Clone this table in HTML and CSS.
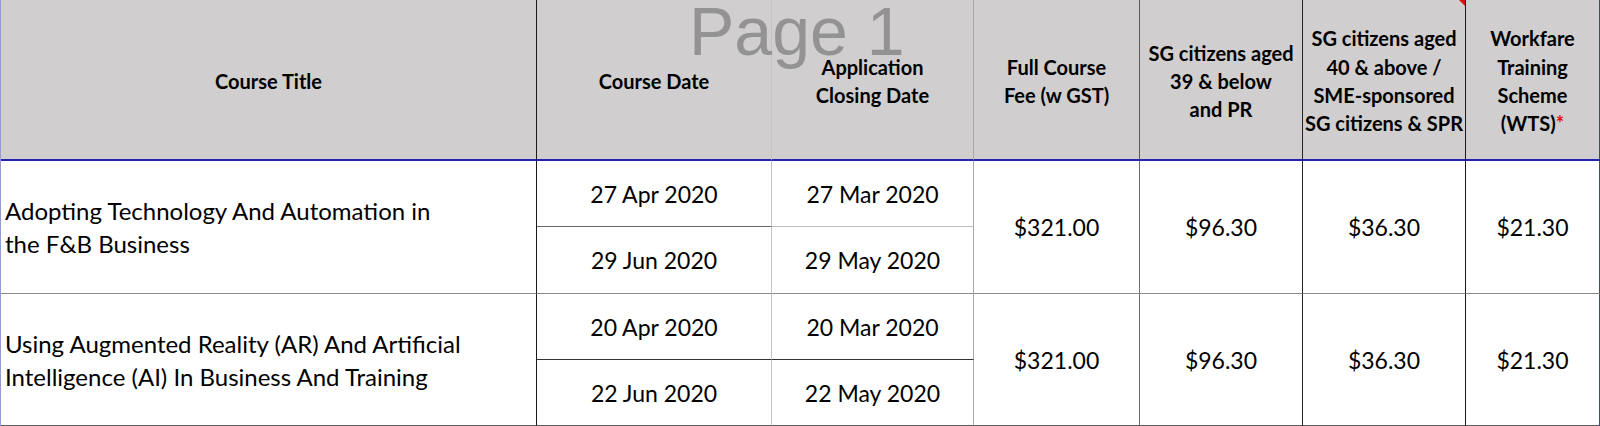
FILE: index.html
```html
<!DOCTYPE html>
<html lang="en">
<head>
<meta charset="utf-8">
<title>Course Fees</title>
<link rel="stylesheet" href="styles.css">
</head>
<body>
<div class="sheet">
  <div class="grid">
    <div class="cell head c1"><span class="txt">Course Title</span></div>
    <div class="cell head c2"><span class="txt">Course Date</span></div>
    <div class="cell head c3"><span class="txt">Application<br>Closing Date</span></div>
    <div class="cell head c4"><span class="txt">Full Course<br>Fee (w GST)</span></div>
    <div class="cell head c5"><span class="txt">SG citizens aged<br>39 &amp; below<br>and PR</span></div>
    <div class="cell head c6"><span class="txt">SG citizens aged<br>40 &amp; above /<br>SME-sponsored<br>SG citizens &amp; SPR</span><span class="comment-mark"></span></div>
    <div class="cell head c7"><span class="txt">Workfare<br>Training<br>Scheme<br>(WTS)<span class="req">*</span></span></div>

    <div class="cell title c1 span2 row-end"><span class="txt">Adopting Technology And Automation in<br>the F&amp;B Business</span></div>
    <div class="cell date c2 split-a">27 Apr 2020</div>
    <div class="cell date c3 split-b">27 Mar 2020</div>
    <div class="cell price c4 span2 row-end">$321.00</div>
    <div class="cell price c5 span2 row-end">$96.30</div>
    <div class="cell price c6 span2 row-end">$36.30</div>
    <div class="cell price c7 span2 row-end">$21.30</div>
    <div class="cell date c2 row-end">29 Jun 2020</div>
    <div class="cell date c3 row-end">29 May 2020</div>

    <div class="cell title c1 span2 last"><span class="txt">Using Augmented Reality (AR) And Artificial<br>Intelligence (AI) In Business And Training</span></div>
    <div class="cell date c2 split-c">20 Apr 2020</div>
    <div class="cell date c3 split-c">20 Mar 2020</div>
    <div class="cell price c4 span2 last">$321.00</div>
    <div class="cell price c5 span2 last">$96.30</div>
    <div class="cell price c6 span2 last">$36.30</div>
    <div class="cell price c7 span2 last">$21.30</div>
    <div class="cell date c2 last">22 Jun 2020</div>
    <div class="cell date c3 last">22 May 2020</div>
  </div>
  <div class="watermark">Page 1</div>
</div>
</body>
</html>
```
FILE: styles.css
```css
html, body {
  margin: 0;
  padding: 0;
  background: #ffffff;
}

.sheet {
  position: relative;
  width: 1600px;
  height: 426px;
  overflow: hidden;
  font-family: "Lato", "Open Sans", sans-serif;
  color: #000;
}

.grid {
  display: grid;
  grid-template-columns: 536px 235px 202px 166px 163px 163px 135px;
  grid-template-rows: 161px 66px 67px 66px 66px;
  border-left: 1px solid #9a9ad2;
  box-sizing: border-box;
  width: 1600px;
}

.cell {
  box-sizing: border-box;
  display: flex;
  align-items: center;
  justify-content: center;
  text-align: center;
  border-right: 1px solid #1a1a1a;
}

.txt {
  display: block;
}

.c1 { border-right-color: #1a1a1a; }
.c2 { border-right-color: #c4c4c4; }
.c3 { border-right-color: #a8a8a8; }
.c4 { border-right-color: #6e6e6e; }
.c5 { border-right-color: #262626; }
.c6 { border-right-color: #1a1a1a; }
.c7 { border-right: 2px solid #3c3cc8; }

.head {
  background: #d0cece;
  border-bottom: 2px solid #2424b0;
  font-weight: 700;
  font-size: 20px;
  line-height: 28.3px;
  padding-top: 3px;
  position: relative;
}

.head.c4 { border-right-color: #5a5a5a; }

.comment-mark {
  position: absolute;
  top: 0;
  right: 0;
  width: 0;
  height: 0;
  border-top: 6px solid #e01010;
  border-left: 6px solid transparent;
}

.req {
  color: #e01010;
}

.span2 {
  grid-row: span 2;
}

.title {
  justify-content: flex-start;
  text-align: left;
  padding-left: 4px;
  font-size: 24px;
  line-height: 33px;
}

.date,
.price {
  font-size: 23px;
}

.row-end {
  border-bottom: 1px solid #8a8a8a;
}

.last {
  border-bottom: 1px solid #5a5a5a;
}

.split-a {
  border-bottom: 1px solid #6a6a6a;
}

.split-b {
  border-bottom: 1px solid #bdbdbd;
}

.split-c {
  border-bottom: 1px solid #333333;
}

.watermark {
  position: absolute;
  left: 689px;
  top: 0;
  font-family: "Liberation Sans", Arial, sans-serif;
  font-size: 68px;
  line-height: 62px;
  color: rgba(120, 120, 120, 0.68);
  pointer-events: none;
  white-space: nowrap;
}
```
